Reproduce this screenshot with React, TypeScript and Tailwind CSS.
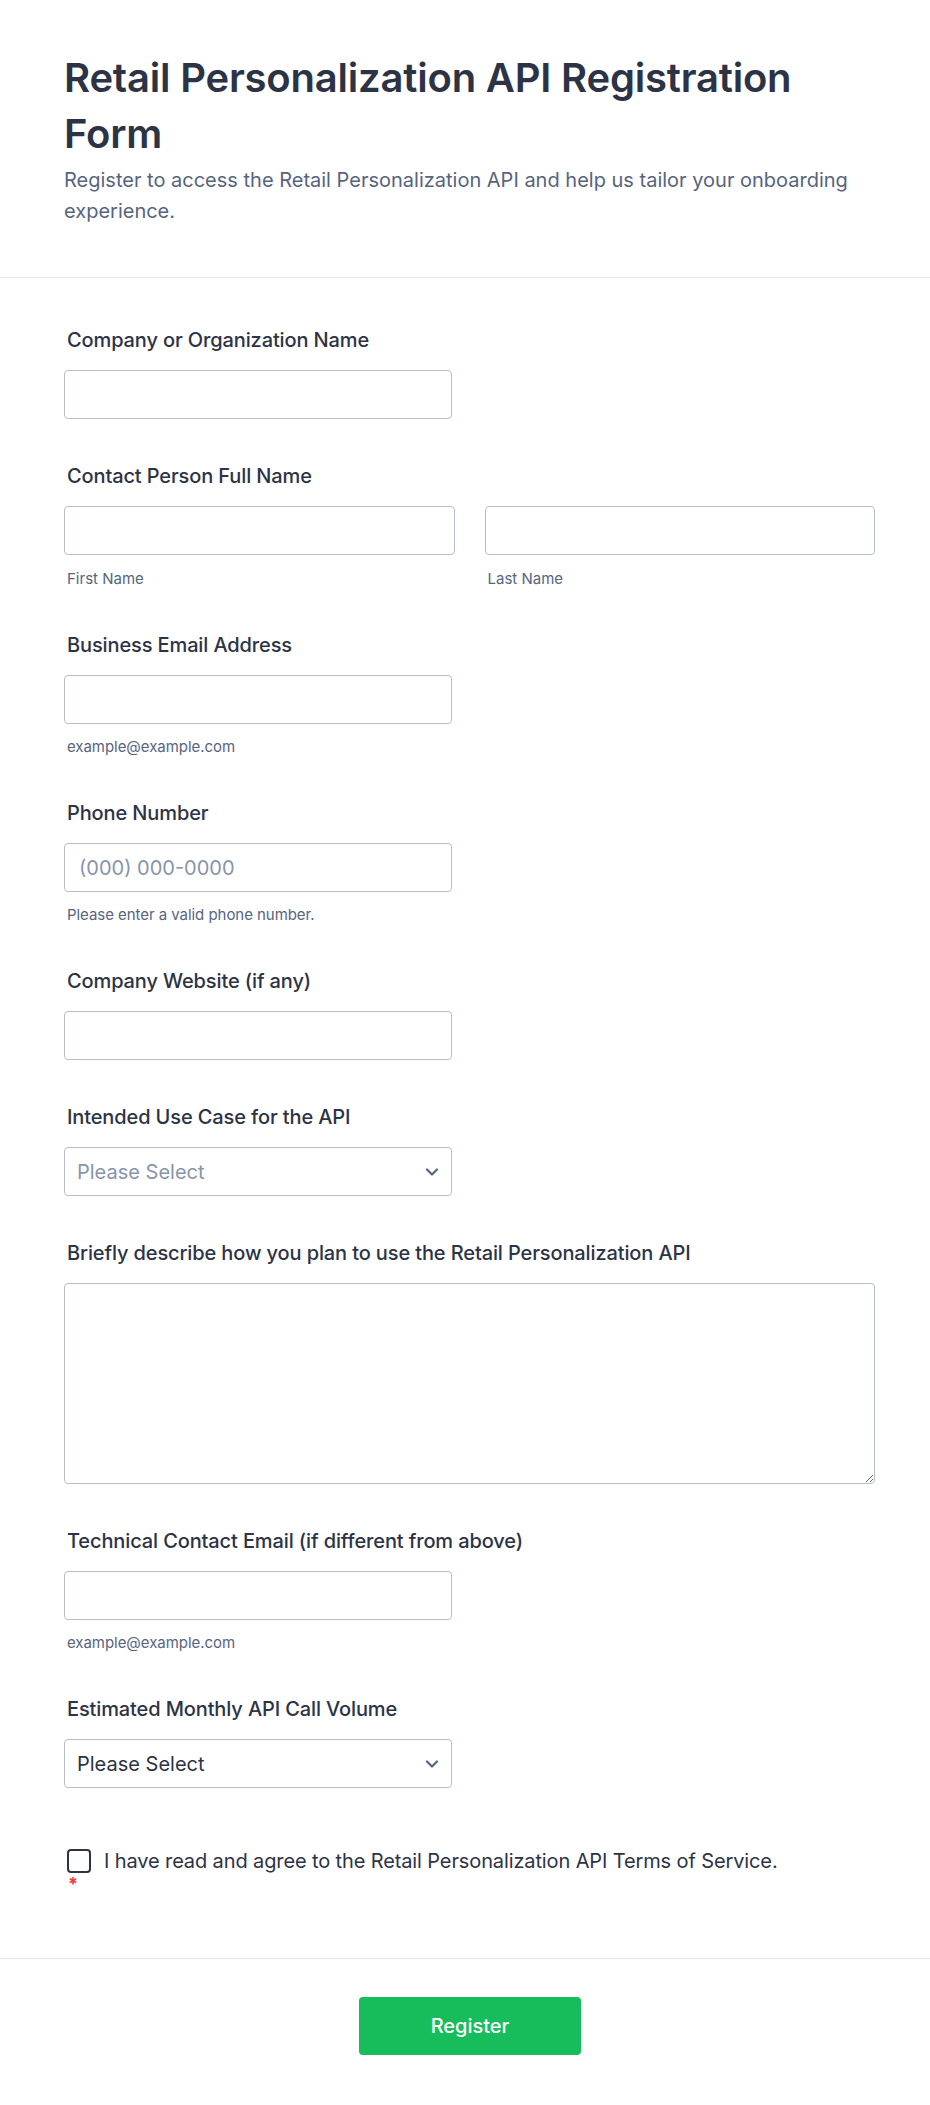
import React from 'react';

const inputCls =
  'block w-[388px] h-[49px] rounded-[4px] border border-[#b8bdc9] bg-white px-[14px] text-[20px] text-[#2c3345] placeholder:text-[#8894ab] outline-none';

function Label({ children }: { children: React.ReactNode }) {
  return (
    <label className="block pl-[3px] mb-[18px] text-[20px] leading-[24px] font-medium tracking-[-0.12px] text-[#2c3345]">
      {children}
    </label>
  );
}

function Hint({ children }: { children: React.ReactNode }) {
  return <div className="mt-[14px] pl-[3px] text-[15px] leading-[18px] tracking-[-0.05px] text-[#57647e]">{children}</div>;
}

function Chevron() {
  return (
    <svg
      className="pointer-events-none absolute right-[13px] top-1/2 -translate-y-1/2"
      width="14"
      height="9"
      viewBox="0 0 14 9"
      fill="none"
    >
      <path d="M2 2l5 5 5-5" stroke="#57647e" strokeWidth="2.2" strokeLinecap="round" strokeLinejoin="round" />
    </svg>
  );
}

function Select({ value, muted }: { value: string; muted?: boolean }) {
  return (
    <div className="relative w-[388px]">
      <select
        className={
          muted
            ? 'block w-full h-[49px] appearance-none rounded-[4px] border border-[#b8bdc9] bg-white pl-[12px] text-[20px] text-[#8894ab] outline-none'
            : 'block w-full h-[49px] appearance-none rounded-[4px] border border-[#b8bdc9] bg-white pl-[12px] text-[20px] text-[#2c3345] outline-none'
        }
        defaultValue=""
      >
        <option value="">{value}</option>
      </select>
      <Chevron />
    </div>
  );
}

export default function App() {
  return (
    <div className="min-h-screen bg-white font-['Inter',sans-serif] text-[#2c3345]">
      {/* Header */}
      <header className="px-[64px] pt-[50px] pb-[50px] border-b border-[#e3e6ec]">
        <h1 className="text-[40px] leading-[56px] font-semibold tracking-[-0.2px] text-[#2c3345]">
          Retail Personalization API Registration Form
        </h1>
        <p className="mt-[3px] text-[20px] leading-[31px] text-[#57647e]">
          Register to access the Retail Personalization API and help us tailor your onboarding experience.
        </p>
      </header>

      {/* Fields */}
      <form className="pl-[64px] pr-[55px] pt-[50px] pb-[65px] flex flex-col gap-[45px]">
        <div>
          <Label>Company or Organization Name</Label>
          <input className={inputCls} />
        </div>

        <div>
          <Label>Contact Person Full Name</Label>
          <div className="grid grid-cols-2 gap-[30px]">
            <div>
              <input className="block w-full h-[49px] rounded-[4px] border border-[#b8bdc9] bg-white px-[14px] text-[20px] outline-none" />
              <div className="mt-[15px] pl-[3px] text-[15px] leading-[18px] text-[#57647e]">First Name</div>
            </div>
            <div>
              <input className="block w-full h-[49px] rounded-[4px] border border-[#b8bdc9] bg-white px-[14px] text-[20px] outline-none" />
              <div className="mt-[15px] pl-[3px] text-[15px] leading-[18px] text-[#57647e]">Last Name</div>
            </div>
          </div>
        </div>

        <div>
          <Label>Business Email Address</Label>
          <input className={inputCls} type="email" />
          <Hint>example@example.com</Hint>
        </div>

        <div>
          <Label>Phone Number</Label>
          <input className={inputCls} placeholder="(000) 000-0000" />
          <Hint>Please enter a valid phone number.</Hint>
        </div>

        <div>
          <Label>Company Website (if any)</Label>
          <input className={inputCls} />
        </div>

        <div>
          <Label>Intended Use Case for the API</Label>
          <Select value="Please Select" muted />
        </div>

        <div>
          <Label>Briefly describe how you plan to use the Retail Personalization API</Label>
          <textarea className="block w-full h-[201px] rounded-[4px] border border-[#b8bdc9] bg-white p-[12px] text-[20px] outline-none" />
        </div>

        <div>
          <Label>Technical Contact Email (if different from above)</Label>
          <input className={inputCls} type="email" />
          <Hint>example@example.com</Hint>
        </div>

        <div>
          <Label>Estimated Monthly API Call Volume</Label>
          <Select value="Please Select" />
        </div>

        <div className="mt-[16px] pl-[3px]">
          <div className="flex items-center gap-[13px]">
            <span className="block w-[24px] h-[24px] shrink-0 rounded-[4px] border-2 border-[#2c3345] bg-white" />
            <span className="text-[20px] leading-[24px] tracking-[-0.12px] text-[#2c3345]">
              I have read and agree to the Retail Personalization API Terms of Service.
            </span>
          </div>
          <div className="mt-[2px] pl-[1px] text-[18px] leading-[18px] font-bold text-[#f23a3c]">*</div>
        </div>
      </form>

      {/* Footer */}
      <footer className="border-t border-[#e3e6ec] pt-[38px] pb-[50px] flex justify-center">
        <button
          type="button"
          className="w-[222px] h-[58px] ml-[10px] rounded-[4px] bg-[#18bd5b] text-[20px] font-medium text-white"
        >
          Register
        </button>
      </footer>
    </div>
  );
}
